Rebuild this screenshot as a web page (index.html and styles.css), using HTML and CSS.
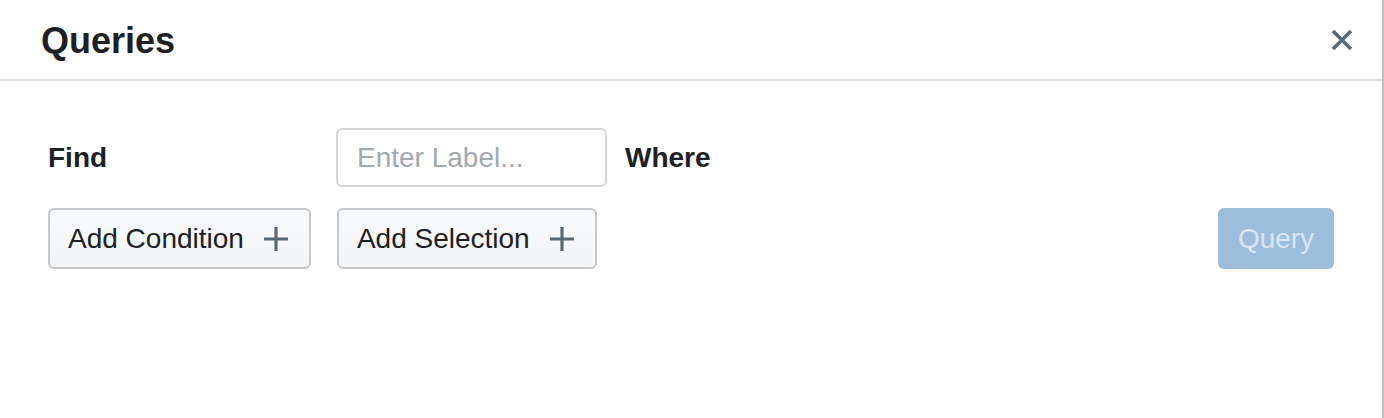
FILE: index.html
```html
<!DOCTYPE html>
<html>
<head>
<meta charset="utf-8">
<link rel="stylesheet" href="styles.css">
</head>
<body>
<div class="panel">
  <header class="panel-header">
    <h1 class="panel-title">Queries</h1>
    <button class="close-btn" aria-label="Close">
      <svg width="22" height="22" viewBox="0 0 22 22"><path d="M2 2 L20 20 M20 2 L2 20" stroke="#5b6875" stroke-width="3.6" stroke-linecap="butt" fill="none"/></svg>
    </button>
  </header>
  <div class="panel-body">
    <div class="row">
      <span class="label find-label">Find</span>
      <input class="label-input" type="text" placeholder="Enter Label...">
      <span class="label where-label">Where</span>
    </div>
    <div class="row">
      <button class="btn btn-light">Add Condition
        <svg class="plus" width="24" height="24" viewBox="0 0 24 24"><path d="M12 0 V24 M0 12 H24" stroke="#5b6875" stroke-width="3.2" fill="none"/></svg>
      </button>
      <button class="btn btn-light">Add Selection
        <svg class="plus" width="24" height="24" viewBox="0 0 24 24"><path d="M12 0 V24 M0 12 H24" stroke="#5b6875" stroke-width="3.2" fill="none"/></svg>
      </button>
      <button class="btn btn-primary" disabled>Query</button>
    </div>
  </div>
</div>
</body>
</html>
```

FILE: styles.css
```css
html, body {
  margin: 0;
  padding: 0;
  background: #ffffff;
}
body {
  font-family: "Liberation Sans", Arial, sans-serif;
  color: #1d2125;
}
.panel {
  width: 1382px;
  height: 418px;
  border-right: 2px solid #bdbdbd;
  box-sizing: content-box;
}
.panel-header {
  height: 79px;
  border-bottom: 2px solid #dedede;
  display: flex;
  align-items: center;
  justify-content: space-between;
  padding: 0 29px 0 41px;
}
.panel-title {
  margin: 0;
  font-size: 36px;
  line-height: 36px;
  font-weight: 700;
  color: #1d2125;
  position: relative;
  top: 1px;
}
.close-btn {
  border: 0;
  background: transparent;
  padding: 0;
  width: 22px;
  height: 22px;
  display: flex;
}
.panel-body {
  padding: 47px 48px 0 48px;
  display: flex;
  flex-direction: column;
  gap: 21px;
}
.row {
  display: flex;
  align-items: center;
}
.label {
  font-size: 28px;
  font-weight: 700;
  color: #1d2125;
}
.find-label {
  width: 288px;
}
.where-label {
  margin-left: 18px;
}
.label-input {
  width: 271px;
  height: 59px;
  box-sizing: border-box;
  border: 2px solid #d4d7da;
  border-radius: 6px;
  padding: 0 19px;
  font-family: "Liberation Sans", Arial, sans-serif;
  font-size: 28px;
  color: #1d2125;
  outline: none;
}
.label-input::placeholder {
  color: #a2a9b0;
}
.btn {
  height: 61px;
  box-sizing: border-box;
  border-radius: 6px;
  font-family: "Liberation Sans", Arial, sans-serif;
  font-size: 28px;
  display: flex;
  align-items: center;
  padding: 0 0 0 18px;
}
.btn-light {
  background: linear-gradient(#f9fafb, #f3f4f6);
  border: 2px solid #c6c8ca;
  color: #1d2125;
  padding-right: 21px;
  margin-right: 26px;
}
.plus {
  margin-left: 20px;
}
.btn-primary {
  margin-left: auto;
  width: 116px;
  justify-content: center;
  padding: 0;
  border: 0;
  background: #9dbddd;
  color: #d9e5f1;
}
```
